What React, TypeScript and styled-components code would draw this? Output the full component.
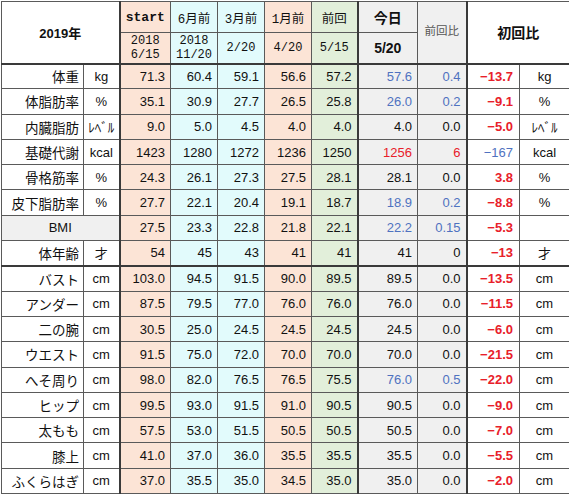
import React from 'react'
import styled, { createGlobalStyle, css } from 'styled-components'

type Tone = 'plain' | 'blue' | 'red'

interface Row {
  label: string
  unit: string
  values: string[]
  today: string
  diff: string
  tone: Tone
  first: string
  firstTone: Tone
  wide?: boolean
}

const PEACH = '#fce4d6'
const CYAN = '#e2fbfc'
const GREEN = '#e2efda'
const GREY = '#f0f0f0'
const LINE = '#5a5a5a'
const THICK = '2px solid #3a3a3a'

const columnBg = [PEACH, CYAN, CYAN, PEACH, GREEN]
const widths = [82, 36, 51, 47, 47, 47, 46, 60, 49, 53, 50]

const toneColor: Record<Tone, string> = {
  plain: '#111',
  blue: '#4f72c0',
  red: '#e8202a',
}

const body: Row[] = [
  { label: '体重', unit: 'kg', values: ['71.3', '60.4', '59.1', '56.6', '57.2'], today: '57.6', diff: '0.4', tone: 'blue', first: '−13.7', firstTone: 'red' },
  { label: '体脂肪率', unit: '%', values: ['35.1', '30.9', '27.7', '26.5', '25.8'], today: '26.0', diff: '0.2', tone: 'blue', first: '−9.1', firstTone: 'red' },
  { label: '内臓脂肪', unit: 'ﾚﾍﾞﾙ', values: ['9.0', '5.0', '4.5', '4.0', '4.0'], today: '4.0', diff: '0.0', tone: 'plain', first: '−5.0', firstTone: 'red' },
  { label: '基礎代謝', unit: 'kcal', values: ['1423', '1280', '1272', '1236', '1250'], today: '1256', diff: '6', tone: 'red', first: '−167', firstTone: 'blue' },
  { label: '骨格筋率', unit: '%', values: ['24.3', '26.1', '27.3', '27.5', '28.1'], today: '28.1', diff: '0.0', tone: 'plain', first: '3.8', firstTone: 'red' },
  { label: '皮下脂肪率', unit: '%', values: ['27.7', '22.1', '20.4', '19.1', '18.7'], today: '18.9', diff: '0.2', tone: 'blue', first: '−8.8', firstTone: 'red' },
  { label: 'BMI', unit: '', values: ['27.5', '23.3', '22.8', '21.8', '22.1'], today: '22.2', diff: '0.15', tone: 'blue', first: '−5.3', firstTone: 'red', wide: true },
  { label: '体年齢', unit: '才', values: ['54', '45', '43', '41', '41'], today: '41', diff: '0', tone: 'plain', first: '−13', firstTone: 'red' },
]

const sizes: [string, string[], string, string, Tone, string][] = [
  ['バスト', ['103.0', '94.5', '91.5', '90.0', '89.5'], '89.5', '0.0', 'plain', '−13.5'],
  ['アンダー', ['87.5', '79.5', '77.0', '76.0', '76.0'], '76.0', '0.0', 'plain', '−11.5'],
  ['二の腕', ['30.5', '25.0', '24.5', '24.5', '24.5'], '24.5', '0.0', 'plain', '−6.0'],
  ['ウエスト', ['91.5', '75.0', '72.0', '70.0', '70.0'], '70.0', '0.0', 'plain', '−21.5'],
  ['へそ周り', ['98.0', '82.0', '76.5', '76.5', '75.5'], '76.0', '0.5', 'blue', '−22.0'],
  ['ヒップ', ['99.5', '93.0', '91.5', '91.0', '90.5'], '90.5', '0.0', 'plain', '−9.0'],
  ['太もも', ['57.5', '53.0', '51.5', '50.5', '50.5'], '50.5', '0.0', 'plain', '−7.0'],
  ['膝上', ['41.0', '37.0', '36.0', '35.5', '35.5'], '35.5', '0.0', 'plain', '−5.5'],
  ['ふくらはぎ', ['37.0', '35.5', '35.0', '34.5', '35.0'], '35.0', '0.0', 'plain', '−2.0'],
]

const measures: Row[] = sizes.map(([label, values, today, diff, tone, first]) => ({
  label, unit: 'cm', values, today, diff, tone, first, firstTone: 'red',
}))

const GlobalStyle = createGlobalStyle`
  body {
    margin: 0;
    background: #fff;
  }
`

const Sheet = styled.div`
  padding: 1px 0 0 1px;
`

const Table = styled.table`
  border-collapse: collapse;
  table-layout: fixed;
  width: 568px;
  font-family: 'Liberation Sans', 'Noto Sans CJK JP', sans-serif;
  color: #111;
  border: 1px solid #333;
`

const HeadRow = styled.tr`
  height: 31px;
`

const DataRow = styled.tr<{ $break?: boolean }>`
  height: 25.3px;
  ${(p) => p.$break && css`
    border-bottom: ${THICK};
  `}
`

const cellBase = css`
  border: 1px solid ${LINE};
  padding: 0;
  white-space: nowrap;
  overflow: hidden;
`

const YearCell = styled.th`
  ${cellBase};
  font-size: 13px;
  font-weight: 700;
  border-right: ${THICK};
  border-bottom: ${THICK};
`

const PeriodCell = styled.th<{ $bg: string; $bold?: boolean; $first?: boolean }>`
  ${cellBase};
  background: ${(p) => p.$bg};
  font-family: 'Liberation Mono', 'Noto Sans CJK JP', monospace;
  font-size: ${(p) => (p.$bold ? '13px' : '12.5px')};
  font-weight: ${(p) => (p.$bold ? 700 : 400)};
  ${(p) => p.$first && css`border-left: ${THICK};`}
`

const DateCell = styled(PeriodCell)`
  font-size: 12px;
  line-height: 14px;
  border-bottom: ${THICK};
`

const TodayHead = styled.th<{ $date?: boolean }>`
  ${cellBase};
  background: ${GREY};
  font-size: 14px;
  font-weight: 700;
  border-left: ${THICK};
  ${(p) => p.$date && css`border-bottom: ${THICK};`}
`

const DiffHead = styled.th`
  ${cellBase};
  background: ${GREY};
  font-size: 11.5px;
  font-weight: 400;
  color: #555;
  padding-bottom: 4px;
  border-bottom: ${THICK};
`

const FirstHead = styled.th`
  ${cellBase};
  font-size: 14px;
  font-weight: 700;
  border-left: ${THICK};
  border-bottom: ${THICK};
`

const LabelCell = styled.td<{ $wide?: boolean }>`
  ${cellBase};
  font-size: 13.5px;
  text-align: ${(p) => (p.$wide ? 'center' : 'right')};
  padding-right: ${(p) => (p.$wide ? '0' : '4px')};
  ${(p) => p.$wide && css`
    background: ${GREY};
    font-size: 13px;
    border-right: ${THICK};
  `}
`

const UnitCell = styled.td<{ $edge?: boolean }>`
  ${cellBase};
  font-size: 13px;
  text-align: center;
  ${(p) => p.$edge && css`border-right: ${THICK};`}
`

const ValueCell = styled.td<{ $bg: string; $tone?: Tone; $left?: boolean }>`
  ${cellBase};
  background: ${(p) => p.$bg};
  color: ${(p) => toneColor[p.$tone ?? 'plain']};
  font-size: 13px;
  text-align: right;
  padding-right: 5px;
  ${(p) => p.$left && css`border-left: ${THICK};`}
`

const FirstCell = styled.td<{ $tone: Tone }>`
  ${cellBase};
  border-left: ${THICK};
  color: ${(p) => toneColor[p.$tone]};
  font-size: 13px;
  font-weight: ${(p) => (p.$tone === 'red' ? 700 : 400)};
  text-align: right;
  padding-right: 6px;
`

const SideUnit = styled.td`
  ${cellBase};
  font-size: 13px;
  text-align: center;
`

const DataLine: React.FC<{ row: Row; last?: boolean }> = ({ row, last }) => (
  <DataRow $break={last}>
    {row.wide ? (
      <LabelCell $wide colSpan={2}>{row.label}</LabelCell>
    ) : (
      <>
        <LabelCell>{row.label}</LabelCell>
        <UnitCell $edge>{row.unit}</UnitCell>
      </>
    )}
    {row.values.map((v, i) => (
      <ValueCell key={i} $bg={columnBg[i]}>{v}</ValueCell>
    ))}
    <ValueCell $bg={GREY} $tone={row.tone} $left>{row.today}</ValueCell>
    <ValueCell $bg={GREY} $tone={row.tone}>{row.diff}</ValueCell>
    <FirstCell $tone={row.firstTone}>{row.first}</FirstCell>
    <SideUnit>{row.unit}</SideUnit>
  </DataRow>
)

export default function App() {
  return (
    <Sheet>
      <GlobalStyle />
      <Table>
        <colgroup>
          {widths.map((w, i) => (
            <col key={i} style={{ width: w }} />
          ))}
        </colgroup>
        <thead>
          <HeadRow>
            <YearCell colSpan={2} rowSpan={2}>2019年</YearCell>
            <PeriodCell $bg={PEACH} $bold $first>start</PeriodCell>
            <PeriodCell $bg={CYAN}>6月前</PeriodCell>
            <PeriodCell $bg={CYAN}>3月前</PeriodCell>
            <PeriodCell $bg={PEACH}>1月前</PeriodCell>
            <PeriodCell $bg={GREEN}>前回</PeriodCell>
            <TodayHead>今日</TodayHead>
            <DiffHead rowSpan={2}>前回比</DiffHead>
            <FirstHead colSpan={2} rowSpan={2}>初回比</FirstHead>
          </HeadRow>
          <HeadRow>
            <DateCell $bg={PEACH} $first>2018<br />6/15</DateCell>
            <DateCell $bg={CYAN}>2018<br />11/20</DateCell>
            <DateCell $bg={CYAN}>2/20</DateCell>
            <DateCell $bg={PEACH}>4/20</DateCell>
            <DateCell $bg={GREEN}>5/15</DateCell>
            <TodayHead $date>5/20</TodayHead>
          </HeadRow>
        </thead>
        <tbody>
          {body.map((row, i) => (
            <DataLine key={row.label} row={row} last={i === body.length - 1} />
          ))}
          {measures.map((row) => (
            <DataLine key={row.label} row={row} />
          ))}
        </tbody>
      </Table>
    </Sheet>
  )
}
